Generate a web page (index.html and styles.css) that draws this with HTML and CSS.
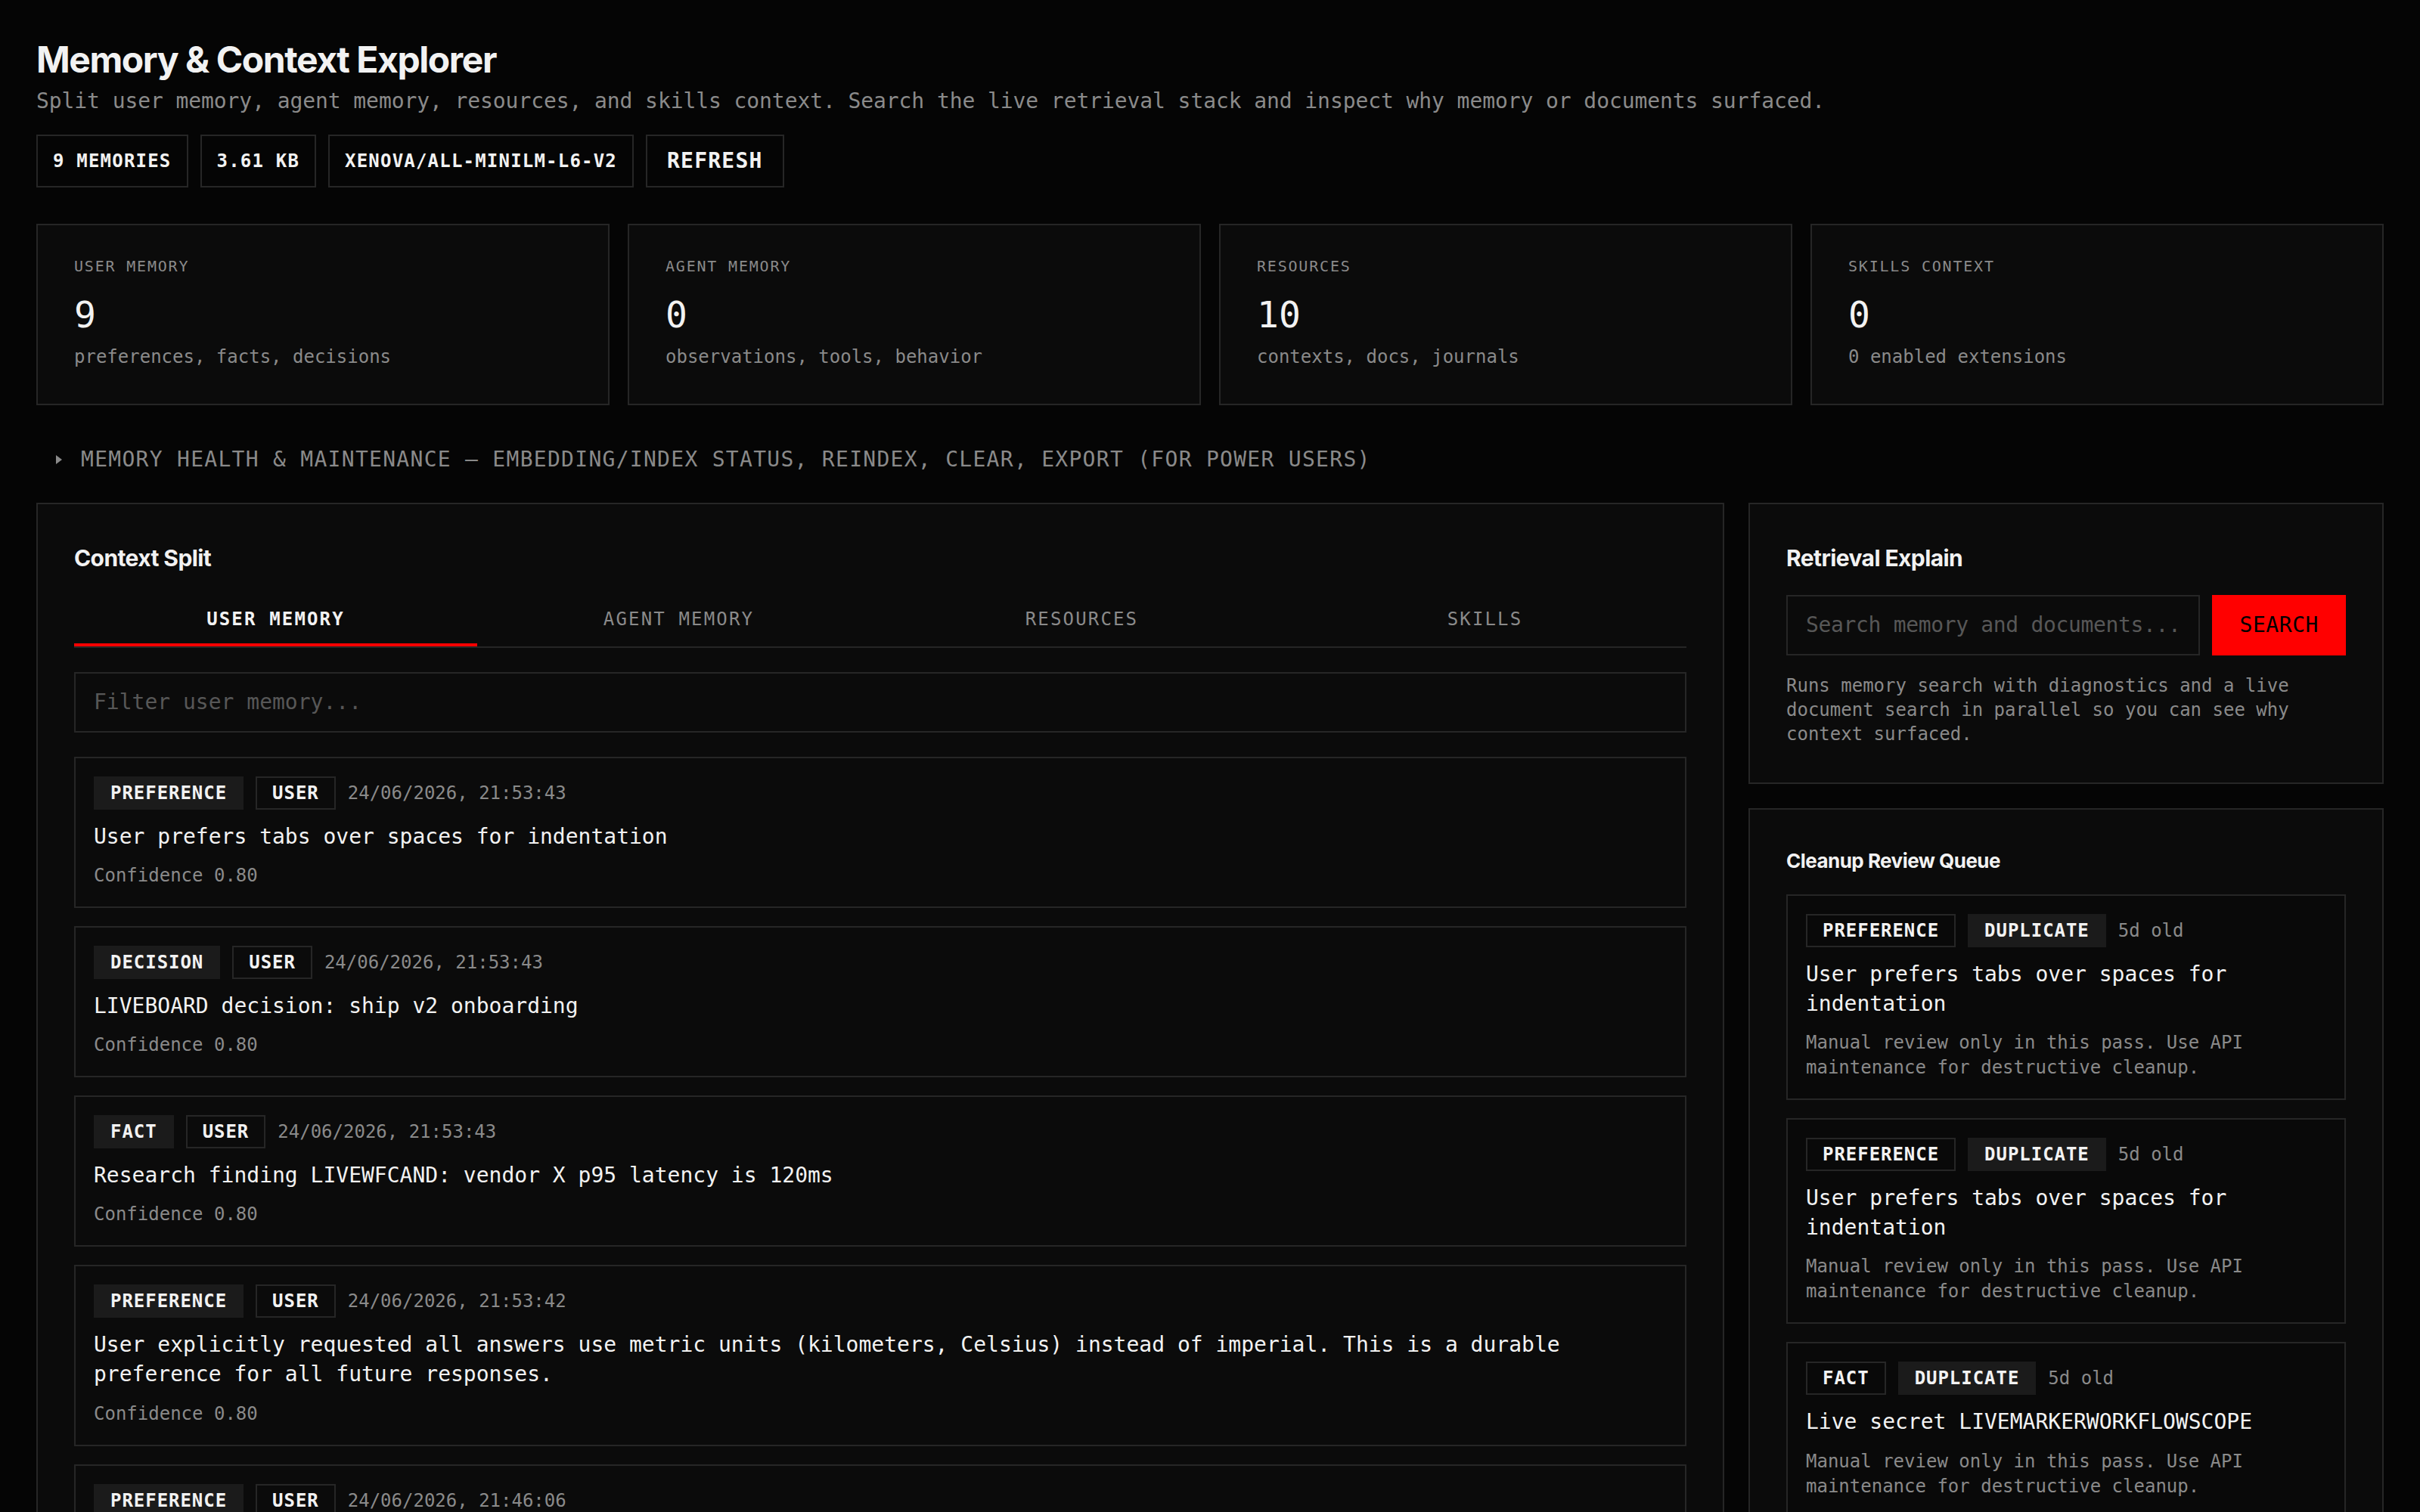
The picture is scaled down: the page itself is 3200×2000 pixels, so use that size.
FILE: index.html
```html
<!DOCTYPE html>
<html lang="en">
<head>
    <meta charset="UTF-8">
    <meta name="viewport" content="width=device-width, initial-scale=1.0">
    <title>Memory &amp; Context Explorer</title>
    <link rel="stylesheet" href="styles.css">
</head>
<body>
    <main class="page">
        <!-- Header: title, blurb, index summary chips -->
        <header class="page-header">
            <h1 class="page-title">Memory &amp; Context Explorer</h1>
            <p class="page-subtitle">Split user memory, agent memory, resources, and skills context. Search the live retrieval stack and inspect why memory or documents surfaced.</p>
            <div class="chip-row">
                <span class="chip">9 memories</span>
                <span class="chip">3.61 KB</span>
                <span class="chip">Xenova/all-MiniLM-L6-v2</span>
                <button class="chip chip-button">Refresh</button>
            </div>
        </header>

        <!-- Counts per context bucket -->
        <section class="stat-grid">
            <div class="stat-card">
                <div class="stat-label">User memory</div>
                <div class="stat-value">9</div>
                <div class="stat-hint">preferences, facts, decisions</div>
            </div>
            <div class="stat-card">
                <div class="stat-label">Agent memory</div>
                <div class="stat-value">0</div>
                <div class="stat-hint">observations, tools, behavior</div>
            </div>
            <div class="stat-card">
                <div class="stat-label">Resources</div>
                <div class="stat-value">10</div>
                <div class="stat-hint">contexts, docs, journals</div>
            </div>
            <div class="stat-card">
                <div class="stat-label">Skills context</div>
                <div class="stat-value">0</div>
                <div class="stat-hint">0 enabled extensions</div>
            </div>
        </section>

        <details class="maintenance">
            <summary>Memory health &amp; maintenance — embedding/index status, reindex, clear, export (for power users)</summary>
        </details>

        <div class="workspace">
            <!-- Left: tabbed context split -->
            <section class="panel">
                <h2 class="panel-title">Context Split</h2>
                <nav class="tabs">
                    <button class="tab active">User memory</button>
                    <button class="tab">Agent memory</button>
                    <button class="tab">Resources</button>
                    <button class="tab">Skills</button>
                </nav>
                <input class="field filter-field" type="text" placeholder="Filter user memory...">

                <div class="memory-list">
                    <article class="memory-item">
                        <div class="meta-row">
                            <span class="tag tag-fill">Preference</span>
                            <span class="tag tag-line">User</span>
                            <span class="meta-text">24/06/2026, 21:53:43</span>
                        </div>
                        <p class="memory-text">User prefers tabs over spaces for indentation</p>
                        <p class="memory-note">Confidence 0.80</p>
                    </article>
                    <article class="memory-item">
                        <div class="meta-row">
                            <span class="tag tag-fill">Decision</span>
                            <span class="tag tag-line">User</span>
                            <span class="meta-text">24/06/2026, 21:53:43</span>
                        </div>
                        <p class="memory-text">LIVEBOARD decision: ship v2 onboarding</p>
                        <p class="memory-note">Confidence 0.80</p>
                    </article>
                    <article class="memory-item">
                        <div class="meta-row">
                            <span class="tag tag-fill">Fact</span>
                            <span class="tag tag-line">User</span>
                            <span class="meta-text">24/06/2026, 21:53:43</span>
                        </div>
                        <p class="memory-text">Research finding LIVEWFCAND: vendor X p95 latency is 120ms</p>
                        <p class="memory-note">Confidence 0.80</p>
                    </article>
                    <article class="memory-item">
                        <div class="meta-row">
                            <span class="tag tag-fill">Preference</span>
                            <span class="tag tag-line">User</span>
                            <span class="meta-text">24/06/2026, 21:53:42</span>
                        </div>
                        <p class="memory-text">User explicitly requested all answers use metric units (kilometers, Celsius) instead of imperial. This is a durable preference for all future responses.</p>
                        <p class="memory-note">Confidence 0.80</p>
                    </article>
                    <article class="memory-item">
                        <div class="meta-row">
                            <span class="tag tag-fill">Preference</span>
                            <span class="tag tag-line">User</span>
                            <span class="meta-text">24/06/2026, 21:46:06</span>
                        </div>
                        <p class="memory-text">User prefers concise answers with code first</p>
                        <p class="memory-note">Confidence 0.80</p>
                    </article>
                </div>
            </section>

            <!-- Right: search explain + cleanup queue -->
            <aside class="side-column">
                <section class="panel">
                    <h2 class="panel-title">Retrieval Explain</h2>
                    <div class="search-row">
                        <input class="field search-field" type="text" placeholder="Search memory and documents...">
                        <button class="search-button">Search</button>
                    </div>
                    <p class="panel-help">Runs memory search with diagnostics and a live document search in parallel so you can see why context surfaced.</p>
                </section>

                <section class="panel">
                    <h3 class="panel-subtitle">Cleanup Review Queue</h3>
                    <div class="cleanup-list">
                        <article class="cleanup-item">
                            <div class="meta-row">
                                <span class="tag tag-line">Preference</span>
                                <span class="tag tag-fill">Duplicate</span>
                                <span class="meta-text">5d old</span>
                            </div>
                            <p class="memory-text">User prefers tabs over spaces for indentation</p>
                            <p class="memory-note">Manual review only in this pass. Use API maintenance for destructive cleanup.</p>
                        </article>
                        <article class="cleanup-item">
                            <div class="meta-row">
                                <span class="tag tag-line">Preference</span>
                                <span class="tag tag-fill">Duplicate</span>
                                <span class="meta-text">5d old</span>
                            </div>
                            <p class="memory-text">User prefers tabs over spaces for indentation</p>
                            <p class="memory-note">Manual review only in this pass. Use API maintenance for destructive cleanup.</p>
                        </article>
                        <article class="cleanup-item">
                            <div class="meta-row">
                                <span class="tag tag-line">Fact</span>
                                <span class="tag tag-fill">Duplicate</span>
                                <span class="meta-text">5d old</span>
                            </div>
                            <p class="memory-text">Live secret LIVEMARKERWORKFLOWSCOPE</p>
                            <p class="memory-note">Manual review only in this pass. Use API maintenance for destructive cleanup.</p>
                        </article>
                    </div>
                </section>
            </aside>
        </div>
    </main>
</body>
</html>
```

FILE: styles.css
```css
* {
    margin: 0;
    padding: 0;
    box-sizing: border-box;
}

:root {
    --bg-color: #050505;
    --panel-bg: #0b0b0b;
    --border-color: #262626;
    --tag-bg: #1b1b1b;
    --text-color: #f2f2f2;
    --muted-color: #8a8a8a;
    --dim-color: #575757;
    --accent-color: #ff0000;
    --mono: "DejaVu Sans Mono", "Liberation Mono", monospace;
    --sans: "Inter", "Liberation Sans", sans-serif;
}

body {
    background-color: var(--bg-color);
    color: var(--text-color);
    font-family: var(--mono);
}

.page {
    padding: 48px;
}

/* Header */
.page-title {
    font-family: var(--sans);
    font-size: 48px;
    font-weight: 700;
    line-height: 1.3;
    letter-spacing: -0.03em;
}

.page-subtitle {
    margin-top: 4px;
    font-size: 28px;
    line-height: 1.4;
    letter-spacing: -0.003em;
    color: var(--muted-color);
}

.chip-row {
    display: flex;
    gap: 16px;
    margin-top: 24px;
}

.chip {
    display: inline-flex;
    align-items: center;
    height: 70px;
    padding: 0 20px;
    border: 2px solid var(--border-color);
    background: transparent;
    color: var(--text-color);
    font-family: var(--mono);
    font-size: 24px;
    font-weight: 700;
    letter-spacing: 0.05em;
    text-transform: uppercase;
}

.chip-button {
    padding: 0 26px;
    font-size: 28px;
    letter-spacing: 0.044em;
    cursor: pointer;
}

/* Stat cards */
.stat-grid {
    display: grid;
    grid-template-columns: repeat(4, 1fr);
    gap: 24px;
    margin-top: 48px;
}

.stat-card {
    padding: 40px 48px 46px;
    background: var(--panel-bg);
    border: 2px solid var(--border-color);
}

.stat-label {
    font-size: 20px;
    line-height: 28px;
    letter-spacing: 0.09em;
    text-transform: uppercase;
    color: var(--muted-color);
}

.stat-value {
    margin-top: 22px;
    font-size: 48px;
    line-height: 56px;
}

.stat-hint {
    margin-top: 12px;
    font-size: 24px;
    line-height: 32px;
    color: var(--muted-color);
}

/* Collapsed maintenance block */
.maintenance {
    margin: 52px 0 37px;
}

.maintenance summary {
    display: flex;
    align-items: center;
    padding-left: 26px;
    list-style: none;
    font-size: 28px;
    line-height: 40px;
    letter-spacing: 0.046em;
    text-transform: uppercase;
    color: var(--muted-color);
    cursor: pointer;
}

.maintenance summary::-webkit-details-marker {
    display: none;
}

/* small closed-state caret */
.maintenance summary::before {
    content: "";
    width: 0;
    height: 0;
    margin-right: 25px;
    border-left: 8px solid var(--muted-color);
    border-top: 6px solid transparent;
    border-bottom: 6px solid transparent;
}

/* Two column workspace */
.workspace {
    display: grid;
    grid-template-columns: 1fr 840px;
    gap: 32px;
    align-items: start;
}

.side-column {
    display: flex;
    flex-direction: column;
    gap: 32px;
}

.panel {
    padding: 48px;
    background: var(--panel-bg);
    border: 2px solid var(--border-color);
}

.panel-title {
    font-family: var(--sans);
    font-size: 30px;
    font-weight: 700;
    line-height: 46px;
    letter-spacing: -0.02em;
    margin-bottom: 26px;
}

.panel-subtitle {
    font-family: var(--sans);
    font-size: 26px;
    font-weight: 700;
    line-height: 40px;
    letter-spacing: -0.02em;
    margin-bottom: 24px;
}

/* Tabs */
.tabs {
    display: grid;
    grid-template-columns: repeat(4, 1fr);
    border-bottom: 2px solid var(--border-color);
}

.tab {
    padding: 16px 0;
    background: none;
    border: none;
    border-bottom: 4px solid transparent;
    color: var(--muted-color);
    font-family: var(--mono);
    font-size: 24px;
    line-height: 32px;
    letter-spacing: 0.09em;
    text-transform: uppercase;
    cursor: pointer;
}

.tab.active {
    color: var(--text-color);
    font-weight: 700;
    border-bottom-color: var(--accent-color);
}

/* Inputs */
.field {
    height: 80px;
    padding: 0 24px;
    background: var(--panel-bg);
    border: 2px solid var(--border-color);
    color: var(--text-color);
    font-family: var(--mono);
    font-size: 28px;
    outline: none;
}

.field::placeholder {
    color: var(--dim-color);
}

.filter-field {
    display: block;
    width: 100%;
    margin-top: 32px;
}

.search-row {
    display: flex;
    gap: 16px;
}

.search-field {
    flex: 1;
    min-width: 0;
    padding-right: 16px;
    letter-spacing: -0.012em;
}

.search-button {
    height: 80px;
    padding: 0 36px;
    background: var(--accent-color);
    border: none;
    color: #000;
    font-family: var(--mono);
    font-size: 28px;
    letter-spacing: 0.02em;
    text-transform: uppercase;
    cursor: pointer;
}

.panel-help {
    margin-top: 24px;
    font-size: 24px;
    line-height: 32px;
    color: var(--muted-color);
}

/* Memory rows */
.memory-list,
.cleanup-list {
    display: flex;
    flex-direction: column;
    gap: 24px;
}

.memory-list {
    margin-top: 32px;
}

.memory-item,
.cleanup-item {
    padding: 24px;
    border: 2px solid var(--border-color);
    background: var(--panel-bg);
}

.cleanup-item {
    background: #090909;
}

.meta-row {
    display: flex;
    align-items: center;
    gap: 16px;
}

.tag {
    display: inline-flex;
    align-items: center;
    height: 44px;
    padding: 0 20px;
    border: 2px solid transparent;
    font-size: 24px;
    font-weight: 700;
    letter-spacing: 0.04em;
    text-transform: uppercase;
    color: var(--text-color);
}

.tag-fill {
    background: var(--tag-bg);
    border-color: var(--tag-bg);
}

.tag-line {
    border-color: var(--border-color);
}

.meta-text {
    font-size: 24px;
    color: var(--muted-color);
}

.memory-text {
    margin-top: 16px;
    font-size: 28px;
    line-height: 1.4;
    color: var(--text-color);
}

.memory-note {
    margin-top: 16px;
    font-size: 24px;
    line-height: 33px;
    color: var(--muted-color);
}
```
